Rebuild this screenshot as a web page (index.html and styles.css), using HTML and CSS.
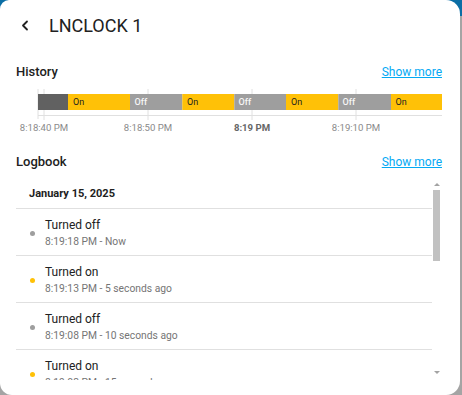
FILE: index.html
```html
<!DOCTYPE html>
<html lang="en">
<head>
<meta charset="utf-8">
<title>LNCLOCK 1</title>
<link rel="stylesheet" href="styles.css">
</head>
<body>
<div class="card">
  <div class="dialog-header">
    <svg class="back" width="24" height="24" viewBox="0 0 24 24"><path d="M14 7.5 L10 11.5 L14 15.5" fill="none" stroke="#212121" stroke-width="1.8" stroke-linecap="round" stroke-linejoin="round"/></svg>
    <span class="title">LNCLOCK 1</span>
  </div>

  <div class="section-head history-head">
    <span class="section-title">History</span>
    <a class="more">Show more</a>
  </div>

  <svg class="chart" width="426" height="50" viewBox="0 0 426 50">
    <g stroke="#e0e0e0" stroke-width="1">
      <line x1="22" y1="4" x2="22" y2="34"/>
      <line x1="28" y1="4" x2="28" y2="35"/>
      <line x1="132" y1="4" x2="132" y2="35"/>
      <line x1="236" y1="4" x2="236" y2="35"/>
      <line x1="340" y1="4" x2="340" y2="35"/>
      <line x1="22" y1="30.5" x2="426" y2="30.5"/>
    </g>
    <rect x="22" y="9" width="30" height="16" fill="#616161"/>
    <rect x="52" y="9" width="62" height="16" fill="#ffc107"/>
    <rect x="114" y="9" width="52.3" height="16" fill="#9e9e9e"/>
    <rect x="166.3" y="9" width="52" height="16" fill="#ffc107"/>
    <rect x="218.3" y="9" width="51.7" height="16" fill="#9e9e9e"/>
    <rect x="270" y="9" width="52.3" height="16" fill="#ffc107"/>
    <rect x="322.3" y="9" width="52.7" height="16" fill="#9e9e9e"/>
    <rect x="375" y="9" width="51" height="16" fill="#ffc107"/>
    <g class="seg-label">
      <text x="57" y="19.5" class="on">On</text>
      <text x="118.5" y="19.5" class="off">Off</text>
      <text x="171" y="19.5" class="on">On</text>
      <text x="222.5" y="19.5" class="off">Off</text>
      <text x="275" y="19.5" class="on">On</text>
      <text x="326.5" y="19.5" class="off">Off</text>
      <text x="379.5" y="19.5" class="on">On</text>
    </g>
    <g class="axis-label">
      <text x="28" y="46">8:18:40 PM</text>
      <text x="132" y="46">8:18:50 PM</text>
      <text x="236" y="46" class="major">8:19 PM</text>
      <text x="340" y="46">8:19:10 PM</text>
    </g>
  </svg>

  <div class="section-head logbook-head">
    <span class="section-title">Logbook</span>
    <a class="more">Show more</a>
  </div>

  <div class="logbox">
    <div class="list">
      <div class="date">January 15, 2025</div>
      <div class="entry">
        <span class="dot dot-off"></span>
        <div class="entry-text">
          <div class="primary">Turned off</div>
          <div class="secondary">8:19:18 PM - Now</div>
        </div>
      </div>
      <div class="entry">
        <span class="dot dot-on"></span>
        <div class="entry-text">
          <div class="primary">Turned on</div>
          <div class="secondary">8:19:13 PM - 5 seconds ago</div>
        </div>
      </div>
      <div class="entry">
        <span class="dot dot-off"></span>
        <div class="entry-text">
          <div class="primary">Turned off</div>
          <div class="secondary">8:19:08 PM - 10 seconds ago</div>
        </div>
      </div>
      <div class="entry">
        <span class="dot dot-on"></span>
        <div class="entry-text">
          <div class="primary">Turned on</div>
          <div class="secondary">8:19:03 PM - 15 seconds ago</div>
        </div>
      </div>
    </div>
    <div class="scrollbar">
      <span class="arrow-up"></span>
      <span class="thumb"></span>
      <span class="track-fill"></span>
      <span class="arrow-down"></span>
    </div>
  </div>
</div>
</body>
</html>
```

FILE: styles.css
```css
html, body {
  margin: 0;
  height: 395px;
  overflow: hidden;
}
body {
  background: linear-gradient(to bottom, #0b6ea5 0, #0b6ea5 16px, #a4a4a4 16px, #a4a4a4 100%);
  font-family: Roboto, "Noto Sans", sans-serif;
  color: #212121;
}
.card {
  width: 460px;
  height: 395px;
  box-sizing: border-box;
  padding: 0 18px 0 16px;
  background: #fff;
  border-radius: 9px 14px 14px 12px;
  overflow: hidden;
}
.dialog-header {
  display: flex;
  align-items: center;
  padding-top: 14px;
  height: 24px;
}
.back {
  display: block;
  margin-left: -3px;
  margin-right: 12px;
}
.title {
  font-size: 18px;
  line-height: 24px;
  font-weight: 400;
  color: #212121;
}
.section-head {
  display: flex;
  justify-content: space-between;
  align-items: baseline;
  line-height: 20px;
}
.history-head {
  margin-top: 24px;
}
.logbook-head {
  margin-top: 17px;
}
.section-title {
  font-size: 13px;
  font-weight: 500;
  color: #212121;
}
.more {
  font-size: 12px;
  color: #03a9f4;
  text-decoration: underline;
  cursor: pointer;
}
.chart {
  display: block;
  margin-top: 3px;
  font-family: Roboto, sans-serif;
}
.seg-label text {
  font-size: 9px;
}
.seg-label .on {
  fill: #212121;
}
.seg-label .off {
  fill: #f7f7f7;
  font-weight: 500;
}
.axis-label text {
  font-size: 9.6px;
  fill: #8a8a8a;
  text-anchor: middle;
}
.axis-label .major {
  font-weight: 700;
  fill: #666;
}
.logbox {
  display: flex;
  margin-top: 9px;
  height: 199px;
}
.list {
  width: 416px;
  overflow: hidden;
}
.date {
  font-size: 11px;
  font-weight: 700;
  line-height: 15px;
  padding: 5px 0 7px 13px;
  border-bottom: 1px solid #e0e0e0;
  color: #212121;
}
.entry {
  display: flex;
  align-items: center;
  padding: 8px 0 6px 14px;
  border-bottom: 1px solid #e0e0e0;
}
.dot {
  width: 5px;
  height: 5px;
  border-radius: 50%;
  margin-right: 10px;
  flex: none;
}
.dot-off { background: #9e9e9e; }
.dot-on { background: #ffc107; }
.primary {
  font-size: 12px;
  line-height: 16px;
  color: #212121;
}
.secondary {
  font-size: 10.3px;
  line-height: 14px;
  margin-top: 2px;
  color: #757575;
}
.scrollbar {
  width: 9px;
  display: flex;
  flex-direction: column;
  align-items: center;
  padding: 2px 0 6px;
  box-sizing: border-box;
}
.arrow-up {
  width: 0;
  height: 0;
  border-left: 3px solid transparent;
  border-right: 3px solid transparent;
  border-bottom: 3px solid #a3a3a3;
}
.thumb {
  width: 7px;
  height: 71px;
  margin-top: 4px;
  background: #c1c1c1;
}
.track-fill {
  flex: 1;
}
.arrow-down {
  width: 0;
  height: 0;
  border-left: 3px solid transparent;
  border-right: 3px solid transparent;
  border-top: 3px solid #a3a3a3;
}
```
